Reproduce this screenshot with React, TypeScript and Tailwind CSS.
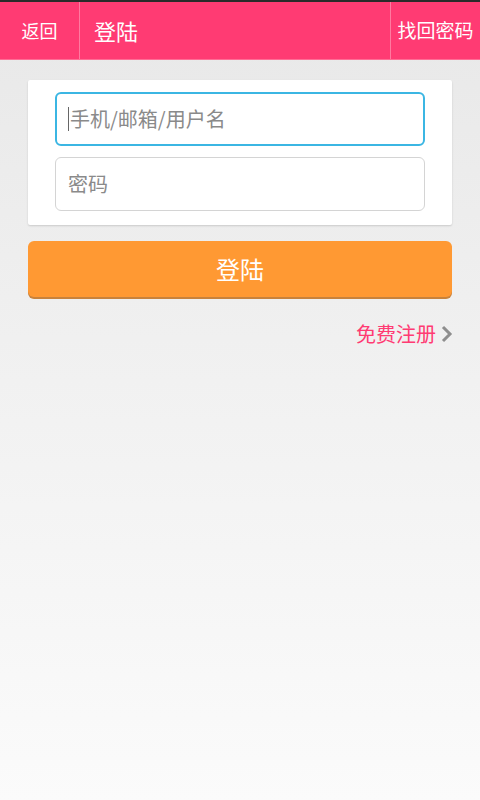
const font = { fontFamily: '"Noto Sans CJK SC", "Noto Sans", sans-serif' }

export default function App() {
  return (
    <div
      style={font}
      className="w-[480px] h-[800px] flex flex-col bg-gradient-to-b from-[#e8e8e8] to-[#fbfbfb] overflow-hidden"
    >
      <div className="h-[2px] bg-[#2a2a2a]" />
      <header className="h-[58px] flex bg-[#ff3b73] border-b border-[#ff6d95] text-white">
        <button className="w-[80px] flex items-center justify-center text-[18px] border-r border-[#ff7aa0]">
          返回
        </button>
        <h1 className="flex-1 flex items-center pl-[14px] text-[22px]">登陆</h1>
        <button className="w-[90px] flex items-center justify-center text-[19px] border-l border-[#ff7aa0]">
          找回密码
        </button>
      </header>

      <main className="px-[28px] pt-[20px] flex flex-col">
        <div className="bg-white rounded-[2px] shadow-[0_1px_2px_rgba(0,0,0,0.15)] px-[27px] pt-[12px] pb-[14px] flex flex-col gap-[11px]">
          <div className="h-[54px] rounded-[6px] border-2 border-[#3bb6e3] flex items-center pl-[11px] text-[20px] text-[#8a8a8a]">
            <span className="w-[1px] h-[24px] bg-[#666] mr-[1px]" />
            手机/邮箱/用户名
          </div>
          <div className="h-[54px] rounded-[6px] border border-[#d4d4d4] flex items-center pl-[12px] text-[20px] text-[#8a8a8a]">
            密码
          </div>
        </div>

        <button className="mt-[16px] h-[56px] rounded-[6px] bg-[#ff9933] text-white text-[24px] shadow-[0_2px_0_#c8823c]">
          登陆
        </button>

        <div className="mt-[22px] flex items-center justify-end text-[20px] text-[#ff3b73]">
          免费注册
          <svg width="12" height="18" viewBox="0 0 12 18" className="ml-[5px] -mr-[1px]">
            <polyline points="2,2 9,9 2,16" fill="none" stroke="#8e8e8e" strokeWidth="3" />
          </svg>
        </div>
      </main>
    </div>
  )
}
